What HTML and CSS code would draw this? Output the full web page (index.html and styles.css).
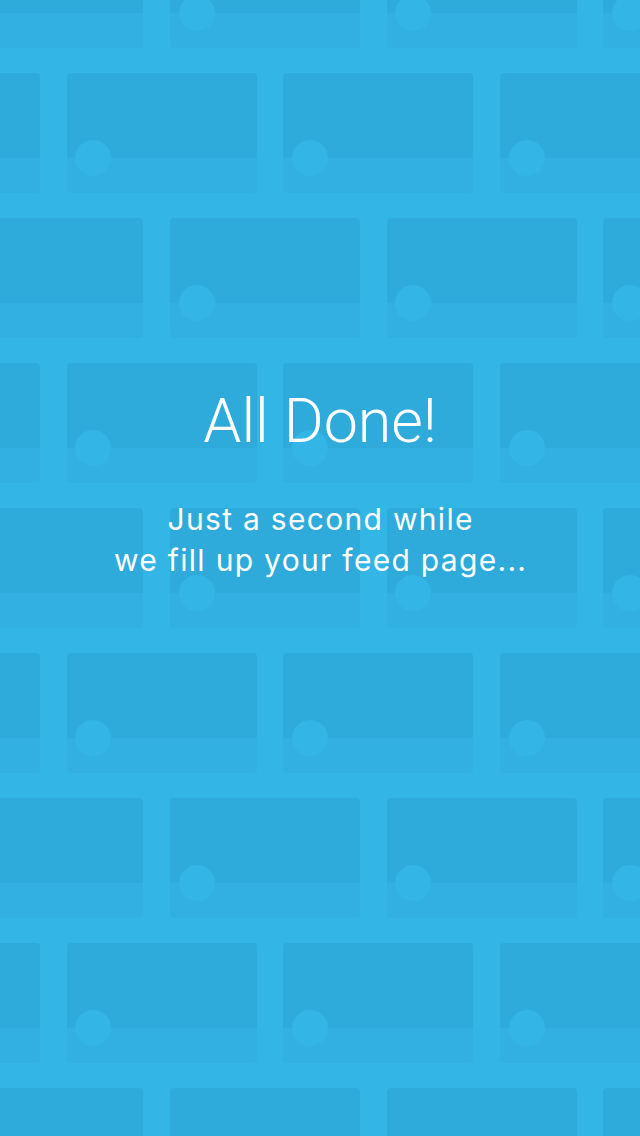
FILE: index.html
```html
<!DOCTYPE html>
<html>
<head>
<meta charset="utf-8">
<link rel="stylesheet" href="styles.css">
</head>
<body>
<div class="screen">
  <div class="pattern">
    <div class="row row-b"><div class="card"></div><div class="card"></div><div class="card"></div><div class="card"></div></div>
    <div class="row row-a"><div class="card"></div><div class="card"></div><div class="card"></div><div class="card"></div></div>
    <div class="row row-b"><div class="card"></div><div class="card"></div><div class="card"></div><div class="card"></div></div>
    <div class="row row-a"><div class="card"></div><div class="card"></div><div class="card"></div><div class="card"></div></div>
    <div class="row row-b"><div class="card"></div><div class="card"></div><div class="card"></div><div class="card"></div></div>
    <div class="row row-a"><div class="card"></div><div class="card"></div><div class="card"></div><div class="card"></div></div>
    <div class="row row-b"><div class="card"></div><div class="card"></div><div class="card"></div><div class="card"></div></div>
    <div class="row row-a"><div class="card"></div><div class="card"></div><div class="card"></div><div class="card"></div></div>
    <div class="row row-b"><div class="card"></div><div class="card"></div><div class="card"></div><div class="card"></div></div>
  </div>
  <div class="message">
    <h1 class="title">All Done!</h1>
    <p class="subtitle">Just a second while<br>we fill up your feed page...</p>
  </div>
</div>
</body>
</html>
```

FILE: styles.css
```css
html, body {
  margin: 0;
  padding: 0;
  background: #33b5e6;
}

.screen {
  position: relative;
  width: 640px;
  height: 1136px;
  overflow: hidden;
  background: #33b5e6;
}

.pattern {
  display: flex;
  flex-direction: column;
  gap: 24.5px;
  margin-top: -72.5px;
}

.row {
  display: flex;
  gap: 26.7px;
  height: 120.5px;
  flex-shrink: 0;
}

.row-b {
  margin-left: -46.7px;
}

.row-a {
  margin-left: -150px;
}

.card {
  position: relative;
  flex: 0 0 190px;
  height: 120.5px;
  border-radius: 4px;
  background: linear-gradient(to bottom, #2eaadb 0, #2eaadb 85.5px, #31b0e1 85.5px, #31b0e1 100%);
}

.card::after {
  content: "";
  position: absolute;
  left: 8.7px;
  top: 67.5px;
  width: 36px;
  height: 36px;
  border-radius: 50%;
  background: #33b5e6;
}

.message {
  position: absolute;
  left: 0;
  right: 0;
  top: 383px;
  display: flex;
  flex-direction: column;
  align-items: center;
  color: #ffffff;
  text-align: center;
}

.title {
  margin: 0;
  font-family: Roboto, "Liberation Sans", sans-serif;
  font-weight: 300;
  font-size: 61px;
  line-height: 76px;
}

.subtitle {
  margin: 40px 0 0;
  padding-left: 1.3px;
  font-family: Inter, "Liberation Sans", sans-serif;
  font-weight: 400;
  font-size: 30px;
  line-height: 41px;
  letter-spacing: 1.3px;
}
```
